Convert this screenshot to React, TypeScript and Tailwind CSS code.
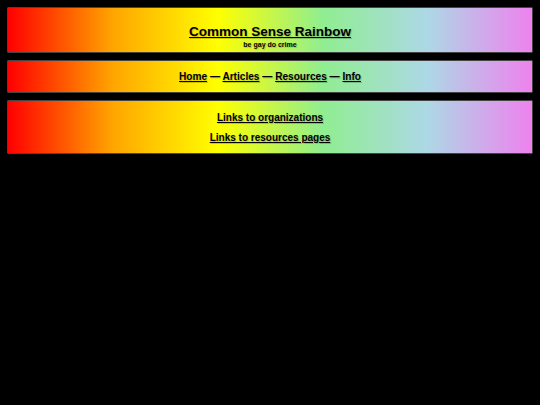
import React from "react";

// rainbow band used by every panel
const band =
  "rounded-[1px] border border-[#444] bg-[linear-gradient(to_right,#ff0000,#ffa500,#ffff00,#90ee90,#add8e6,#ee82ee)] text-center text-black [text-shadow:1px_1px_1px_rgba(0,0,0,0.2)]";

const navLinks = ["Home", "Articles", "Resources", "Info"];

export default function App() {
  return (
    <div className="min-h-[405px] bg-black p-[7px] font-['Liberation_Sans',Arial,sans-serif]">
      <div className="flex flex-col gap-[7px]">
        {/* Header */}
        <header className={`${band} pt-[16px] pb-[3px]`}>
          <h1 className="text-[13.5px] font-bold leading-[16px]">
            <a href="#" className="underline">
              Common Sense Rainbow
            </a>
          </h1>
          <p className="text-[7px] font-bold leading-[9px]">be gay do crime</p>
        </header>

        {/* Nav */}
        <nav className={`${band} pt-[10px] pb-[9px] text-[10.1px] font-bold leading-[12px]`}>
          {navLinks.map((l, i) => (
            <React.Fragment key={l}>
              {i > 0 && " — "}
              <a href="#" className="underline">
                {l}
              </a>
            </React.Fragment>
          ))}
        </nav>

        {/* Links */}
        <main className={`${band} flex flex-col gap-[8px] pt-[11px] pb-[9px] text-[10px] font-bold leading-[12px]`}>
          <a href="#" className="underline">
            Links to organizations
          </a>
          <a href="#" className="underline">
            Links to resources pages
          </a>
        </main>
      </div>
    </div>
  );
}
